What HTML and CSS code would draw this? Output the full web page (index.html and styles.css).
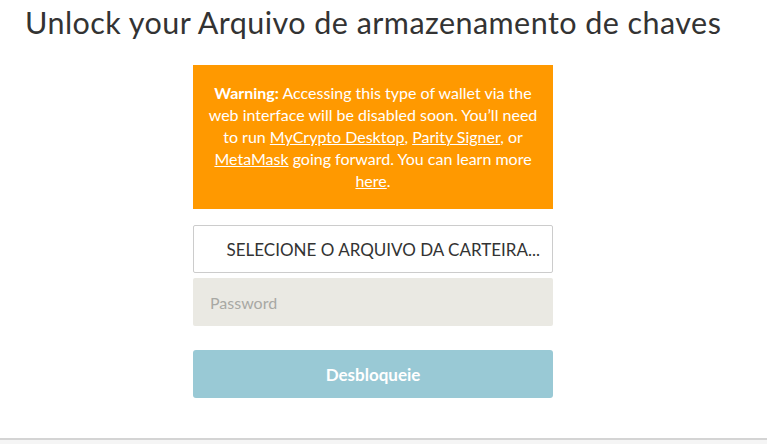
FILE: index.html
```html
<!DOCTYPE html>
<html lang="en">
<head>
  <meta charset="UTF-8">
  <title>Unlock your Arquivo de armazenamento de chaves</title>
  <link rel="stylesheet" href="styles.css">
</head>
<body>
  <main class="unlock">
    <h1>Unlock your Arquivo de armazenamento de chaves</h1>
    <div class="unlock-form">
      <!-- Deprecation warning -->
      <div class="warning">
        <strong>Warning:</strong> Accessing this type of wallet via the web interface will be disabled soon. You’ll need to run <a href="#">MyCrypto Desktop</a>, <a href="#">Parity Signer</a>, or <a href="#">MetaMask</a> going forward. You can learn more <a href="#">here</a>.
      </div>
      <label class="file-select">
        <span class="file-label">Selecione o arquivo da carteira...</span>
      </label>
      <input type="password" class="password" placeholder="Password">
      <button class="unlock-btn" disabled>Desbloqueie</button>
    </div>
  </main>
  <footer></footer>
</body>
</html>
```

FILE: styles.css
```css
body {
  font-family: 'Lato', 'Liberation Sans', sans-serif;
  background-color: #fff;
  color: #333;
  margin: 0;
  padding: 0;
}
.unlock {
  height: 438px;
}
h1 {
  margin: 0;
  padding: 2px 0 0 25px;
  font-size: 30.5px;
  font-weight: 400;
  line-height: 40px;
  letter-spacing: 0.45px;
  color: #333;
}
.unlock-form {
  width: 360px;
  margin: 23px 0 0 193px;
  display: flex;
  flex-direction: column;
}
.warning {
  background-color: #ff9900;
  color: #fff;
  text-align: center;
  font-size: 16px;
  line-height: 22px;
  padding: 17px 14px 17px;
}
.warning a {
  color: #fff;
}
.file-select {
  margin-top: 16px;
  height: 48px;
  box-sizing: border-box;
  border: 1px solid #ccc;
  border-radius: 2px;
  display: flex;
  align-items: center;
  justify-content: flex-end;
  padding-right: 12px;
}
.file-label {
  text-transform: uppercase;
  font-size: 17px;
  color: #333;
}
.password {
  margin-top: 5px;
  height: 48px;
  box-sizing: border-box;
  border: none;
  border-radius: 2px;
  background-color: #eae9e3;
  padding: 0 17px;
  font-family: inherit;
  font-size: 16px;
  color: #333;
}
.password::placeholder {
  color: #a8a8a4;
}
.unlock-btn {
  margin-top: 24px;
  height: 48px;
  border: none;
  border-radius: 3px;
  background-color: #99c9d5;
  color: #fff;
  font-family: inherit;
  font-size: 17px;
  font-weight: 700;
}
footer {
  border-top: 2px solid #d4d4d4;
  background-color: #f5f5f5;
  height: 10px;
}
```
